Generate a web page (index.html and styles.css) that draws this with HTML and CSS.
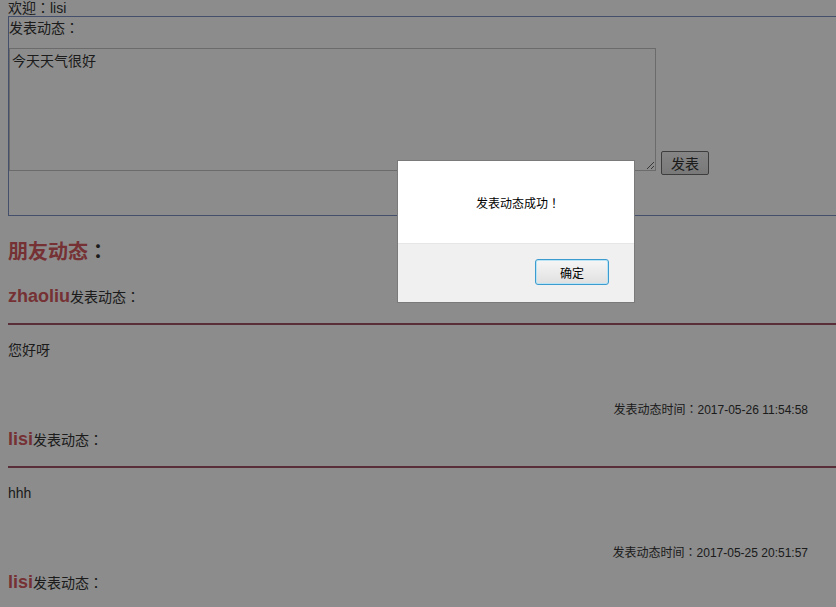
FILE: index.html
```html
<!DOCTYPE html>
<html lang="zh-CN">
<head>
<meta charset="utf-8">
<title>朋友动态</title>
<link rel="stylesheet" href="styles.css">
</head>
<body>
<div class="welcome">欢迎：lisi</div>
<form class="compose">
  <div class="compose-label">发表动态：</div>
  <div class="compose-row">
    <textarea class="compose-input">今天天气很好</textarea>
    <button type="button" class="compose-btn">发表</button>
  </div>
</form>

<h2 class="feed-title"><span class="accent">朋友动态</span>：</h2>

<div class="post">
  <div class="post-head"><span class="post-user">zhaoliu</span>发表动态：</div>
  <hr class="post-rule">
  <div class="post-body">您好呀</div>
  <div class="post-time">发表动态时间：2017-05-26 11:54:58</div>
</div>
<div class="post">
  <div class="post-head"><span class="post-user">lisi</span>发表动态：</div>
  <hr class="post-rule">
  <div class="post-body">hhh</div>
  <div class="post-time">发表动态时间：2017-05-25 20:51:57</div>
</div>
<div class="post">
  <div class="post-head"><span class="post-user">lisi</span>发表动态：</div>
  <hr class="post-rule">
</div>

<div class="overlay"></div>
<div class="dialog">
  <div class="dialog-msg">发表动态成功！</div>
  <div class="dialog-foot">
    <button type="button" class="dialog-btn">确定</button>
  </div>
</div>
</body>
</html>
```
FILE: styles.css
```css
html, body {
  overflow: hidden;
}
body {
  margin: 0 0 0 8px;
  font-family: "Liberation Sans", "Noto Sans CJK TC", sans-serif;
  font-feature-settings: "locl" 0;
  font-size: 14px;
  color: #333;
  background: #fff;
}
.welcome {
  line-height: 16px;
  height: 16px;
}
.compose {
  margin: 0;
  height: 198px;
  border: 1px solid #7d90c4;
  border-right: 0;
}
.compose-label {
  line-height: 22px;
  height: 22px;
  margin-bottom: 9px;
}
.compose-row {
  display: flex;
  align-items: flex-end;
}
.compose-input {
  box-sizing: border-box;
  width: 647px;
  height: 123px;
  margin: 0 0 4px 0;
  padding: 3px 2px;
  border: 1px solid #c4c4c4;
  font-family: "Liberation Sans", "Noto Sans CJK TC", sans-serif;
  font-feature-settings: "locl" 0;
  font-size: 14px;
  line-height: 18px;
  color: #333;
  background: #fff;
}
.compose-btn {
  box-sizing: border-box;
  width: 48px;
  height: 24px;
  margin-left: 5px;
  padding: 0;
  border: 1px solid #707070;
  border-radius: 2px;
  background: linear-gradient(#f2f2f2, #dcdcdc);
  font-family: "Liberation Sans", "Noto Sans CJK TC", sans-serif;
  font-size: 14px;
  color: #333;
}
.feed-title {
  margin: 22px 0 0;
  font-size: 20px;
  line-height: 28px;
  font-weight: bold;
  color: #333;
}
.accent {
  color: #d65a60;
}
.post-head {
  margin-top: 18px;
  line-height: 24px;
  height: 24px;
  font-size: 14px;
}
.post-user {
  font-size: 18px;
  font-weight: bold;
  color: #d65a60;
}
.post-rule {
  margin: 15px 0 15px;
  height: 2px;
  border: 0;
  background: #a35566;
}
.post-body {
  line-height: 20px;
  height: 62px;
}
.post-time {
  width: 800px;
  text-align: right;
  font-size: 12px;
  line-height: 16px;
}
.post + .post .post-head {
  margin-top: 9px;
}
.overlay {
  position: fixed;
  inset: 0;
  background: rgba(0, 0, 0, 0.45);
}
.dialog {
  position: fixed;
  left: 397px;
  top: 160px;
  width: 238px;
  height: 143px;
  box-sizing: border-box;
  border: 1px solid #7a7a7a;
  background: #fff;
  display: flex;
  flex-direction: column;
}
.dialog-msg {
  height: 82px;
  display: flex;
  align-items: center;
  justify-content: center;
  font-size: 12px;
  color: #000;
  padding-left: 4px;
}
.dialog-foot {
  flex: 1;
  background: #f0f0f0;
  border-top: 1px solid #e6e6e6;
  display: flex;
  justify-content: flex-end;
  align-items: flex-start;
  padding: 15px 25px 0 0;
}
.dialog-btn {
  box-sizing: border-box;
  width: 74px;
  height: 26px;
  padding: 0;
  border: 1px solid #3c9bcf;
  border-radius: 3px;
  background: linear-gradient(#f6f6f6, #e0e0e0);
  box-shadow: inset 0 0 0 1px #b8e4f6;
  font-family: "Liberation Sans", "Noto Sans CJK TC", sans-serif;
  font-size: 12px;
  color: #000;
}
```
